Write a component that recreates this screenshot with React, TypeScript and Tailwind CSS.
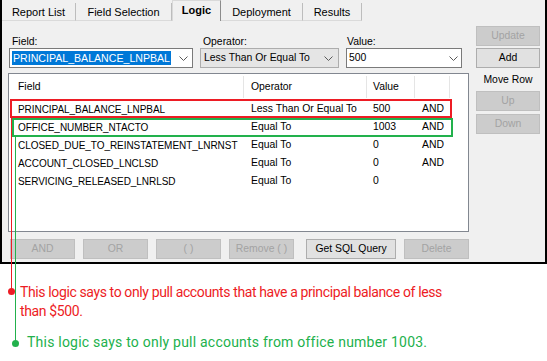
import React from 'react'

const UI_FONT = { fontFamily: '"Liberation Sans", Arial, sans-serif' }
const NOTE_FONT = { fontFamily: 'Roboto, "Noto Sans", sans-serif' }

const ROWS = [
  { field: 'PRINCIPAL_BALANCE_LNPBAL', op: 'Less Than Or Equal To', value: '500', join: 'AND' },
  { field: 'OFFICE_NUMBER_NTACTO', op: 'Equal To', value: '1003', join: 'AND' },
  { field: 'CLOSED_DUE_TO_REINSTATEMENT_LNRNST', op: 'Equal To', value: '0', join: 'AND' },
  { field: 'ACCOUNT_CLOSED_LNCLSD', op: 'Equal To', value: '0', join: 'AND' },
  { field: 'SERVICING_RELEASED_LNRLSD', op: 'Equal To', value: '0', join: '' },
]

const TABS = [
  { label: 'Report List', w: 'w-[74px]' },
  { label: 'Field Selection', w: 'w-[96px]' },
  { label: 'Logic', w: 'w-[49px]', active: true },
  { label: 'Deployment', w: 'w-[82px]' },
  { label: 'Results', w: 'w-[59px]' },
]

function Chevron() {
  return (
    <svg width="9" height="5" viewBox="0 0 9 5" className="shrink-0">
      <path d="M0.5 0.5 L4.5 4.5 L8.5 0.5" fill="none" stroke="#5a5a5a" strokeWidth="1" />
    </svg>
  )
}

function Btn({ children, disabled, className = '' }: { children: React.ReactNode; disabled?: boolean; className?: string }) {
  return (
    <div
      className={`h-[20px] flex items-center justify-center border text-[10.4px] leading-none ${
        disabled ? 'bg-[#cccccc] border-[#bfbfbf] text-[#a3a3a3]' : 'bg-[#e1e1e1] border-[#adadad] text-black'
      } ${className}`}
    >
      {children}
    </div>
  )
}

export default function App() {
  return (
    <div className="relative w-[547px] h-[361px] bg-white overflow-hidden" style={UI_FONT}>
      {/* the form */}
      <div className="h-[264px] border-l-2 border-r-2 border-b-2 border-black bg-[#f0f0f0] flex flex-col">
        <div className="h-[21px] flex items-end shrink-0">
          {TABS.map((t) =>
            t.active ? (
              <div
                key={t.label}
                className={`${t.w} h-[21px] flex items-center justify-center text-[11px] font-bold text-black border-x border-t border-[#d9d9d9] border-r-[#8c8c8c] bg-[#f0f0f0] pb-[1px]`}
              >
                {t.label}
              </div>
            ) : (
              <div
                key={t.label}
                className={`${t.w} h-[18px] flex items-center justify-center text-[11px] text-black border-r border-b border-[#bdbdbd] border-b-[#dadada] bg-[#f0f0f0] pt-[1px]`}
              >
                {t.label}
              </div>
            )
          )}
        </div>

        <div className="flex-1 flex pl-[6px] pr-[5px]">
          {/* left column */}
          <div className="w-[461px] flex flex-col">
            <div className="flex items-end pt-[14px]">
              <div className="ml-[1px] w-[184px] flex flex-col">
                <div className="h-[13px] pl-[3px] text-[10.4px] leading-[13px] text-black">Field:</div>
                <div className="h-[20px] bg-white border border-[#7a7a7a] flex items-center pl-[2px] pr-[4px]">
                  <span className="bg-[#0078d7] text-white text-[10.6px] leading-[14px] h-[14px] px-[1px]">
                    PRINCIPAL_BALANCE_LNPBAL
                  </span>
                  <div className="flex-1" />
                  <Chevron />
                </div>
              </div>
              <div className="ml-[7px] w-[139px] flex flex-col">
                <div className="h-[13px] pl-[3px] text-[10.4px] leading-[13px] text-black">Operator:</div>
                <div className="h-[20px] bg-[#e5e5e5] border border-[#adadad] flex items-center pl-[3px] pr-[5px]">
                  <span className="text-[10.4px] text-black">Less Than Or Equal To</span>
                  <div className="flex-1" />
                  <Chevron />
                </div>
              </div>
              <div className="ml-[7px] w-[116px] flex flex-col">
                <div className="h-[13px] pl-[1px] text-[10.4px] leading-[13px] text-black">Value:</div>
                <div className="h-[20px] bg-white border border-[#7a7a7a] flex items-center pl-[2px] pr-[3px]">
                  <span className="text-[10.4px] text-black">500</span>
                  <div className="flex-1" />
                  <Chevron />
                </div>
              </div>
            </div>

            {/* list view */}
            <div className="mt-[5px] h-[159px] bg-white border border-[#828790] text-[10.4px] text-black">
              <div className="h-[26px] grid grid-cols-[235px_123px_48px_35px_1fr] items-center">
                <div className="pl-[9px] h-[22px] flex items-center border-r border-[#e5e5e5]">Field</div>
                <div className="pl-[7px] h-[22px] flex items-center border-r border-[#e5e5e5]">Operator</div>
                <div className="pl-[6px] h-[22px] flex items-center border-r border-[#e5e5e5]">Value</div>
                <div className="h-[22px] border-r border-[#e5e5e5]" />
                <div />
              </div>
              {ROWS.map((r) => (
                <div key={r.field} className="h-[18px] grid grid-cols-[235px_123px_48px_35px_1fr] items-center">
                  <div className="pl-[9px] whitespace-nowrap text-[10px] tracking-[-0.05px] overflow-hidden">{r.field}</div>
                  <div className="pl-[7px] whitespace-nowrap">{r.op}</div>
                  <div className="pl-[6px]">{r.value}</div>
                  <div className="pl-[7px]">{r.join}</div>
                  <div />
                </div>
              ))}
            </div>

            <div className="mt-[7px] flex pl-[2px]">
              <Btn disabled className="w-[65px]">AND</Btn>
              <Btn disabled className="w-[65px] ml-[8px]">OR</Btn>
              <Btn disabled className="w-[65px] ml-[8px]">( )</Btn>
              <Btn disabled className="w-[65px] ml-[8px]">Remove ( )</Btn>
              <Btn className="w-[90px] ml-[12px]">Get SQL Query</Btn>
              <Btn disabled className="w-[65px] ml-[8px]">Delete</Btn>
            </div>
          </div>

          {/* right column */}
          <div className="ml-[7px] w-[64px] flex flex-col pt-[5px]">
            <Btn disabled>Update</Btn>
            <Btn className="mt-[2px]">Add</Btn>
            <div className="h-[23px] flex items-center justify-center text-[10.4px] text-black">Move Row</div>
            <Btn disabled>Up</Btn>
            <Btn disabled className="mt-[3px]">Down</Btn>
          </div>
        </div>
      </div>

      {/* annotation notes */}
      <div className="pt-[19px] text-[14px] leading-[19px]" style={NOTE_FONT}>
        <div className="pl-[20px] text-[#ed1c24] whitespace-nowrap tracking-[-0.38px]">
          This logic says to only pull accounts that have a principal balance of less
          <br />
          than $500.
        </div>
        <div className="mt-[12px] pl-[27px] text-[#22b14c] whitespace-nowrap tracking-[0.22px]">
          This logic says to only pull accounts from office number 1003.
        </div>
      </div>

      {/* highlight boxes and callout lines */}
      <div className="absolute left-[10px] top-[99px] w-[442px] h-[19px] border-2 border-[#ed1c24]" />
      <div className="absolute left-[12px] top-[118px] w-[441px] h-[19px] border-2 border-[#22b14c]" />
      <div className="absolute left-[10.5px] top-[117px] w-[1.5px] h-[174px] bg-[#ed1c24]" />
      <div className="absolute left-[14.5px] top-[136px] w-[1.5px] h-[207px] bg-[#22b14c]" />
      <div className="absolute left-[7.5px] top-[287.5px] w-[7px] h-[7px] rounded-full bg-[#ed1c24]" />
      <div className="absolute left-[11.5px] top-[339.5px] w-[7px] h-[7px] rounded-full bg-[#22b14c]" />
    </div>
  )
}
